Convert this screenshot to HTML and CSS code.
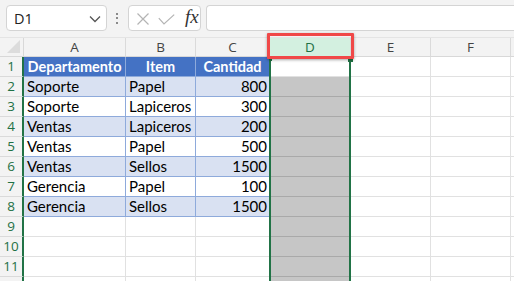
FILE: index.html
```html
<!DOCTYPE html>
<html>
<head>
<meta charset="utf-8">
<link rel="stylesheet" href="styles.css">
</head>
<body>
<div class="app">
  <div class="fbar">
    <div class="namebox">
      <span class="ref">D1</span>
      <svg class="chev" width="12" height="8" viewBox="0 0 12 8"><path d="M1 1.5 L6 6.5 L11 1.5" fill="none" stroke="#555" stroke-width="1.3"/></svg>
    </div>
    <div class="dots"><i></i><i></i><i></i></div>
    <div class="fxbox">
      <svg class="ico" width="14" height="12" viewBox="0 0 14 12"><path d="M1.5 0.5 L12.5 11.5 M12.5 0.5 L1.5 11.5" fill="none" stroke="#b4b4b4" stroke-width="1.2"/></svg>
      <svg class="ico chk" width="17" height="11" viewBox="0 0 17 11"><path d="M0.8 4.2 L6 10 L16.2 0.6" fill="none" stroke="#b4b4b4" stroke-width="1.2"/></svg>
      <span class="fx">fx</span>
    </div>
    <div class="formula"></div>
  </div>
  <div class="sheet">
    <div class="c corner"><span class="tri"></span></div>
    <div class="c ch">A</div><div class="c ch">B</div><div class="c ch">C</div><div class="c ch chsel">D</div><div class="c ch">E</div><div class="c ch">F</div><div class="c ch"></div>

    <div class="c rh">1</div><div class="c th">Departamento</div><div class="c th">Item</div><div class="c th">Cantidad</div><div class="c act"></div><div class="c"></div><div class="c"></div><div class="c"></div>

    <div class="c rh">2</div><div class="c tb">Soporte</div><div class="c tb">Papel</div><div class="c tb num">800</div><div class="c sel"></div><div class="c"></div><div class="c"></div><div class="c"></div>

    <div class="c rh">3</div><div class="c tw">Soporte</div><div class="c tw">Lapiceros</div><div class="c tw num">300</div><div class="c sel"></div><div class="c"></div><div class="c"></div><div class="c"></div>

    <div class="c rh">4</div><div class="c tb">Ventas</div><div class="c tb">Lapiceros</div><div class="c tb num">200</div><div class="c sel"></div><div class="c"></div><div class="c"></div><div class="c"></div>

    <div class="c rh">5</div><div class="c tw">Ventas</div><div class="c tw">Papel</div><div class="c tw num">500</div><div class="c sel"></div><div class="c"></div><div class="c"></div><div class="c"></div>

    <div class="c rh">6</div><div class="c tb">Ventas</div><div class="c tb">Sellos</div><div class="c tb num">1500</div><div class="c sel"></div><div class="c"></div><div class="c"></div><div class="c"></div>

    <div class="c rh">7</div><div class="c tw">Gerencia</div><div class="c tw">Papel</div><div class="c tw num">100</div><div class="c sel"></div><div class="c"></div><div class="c"></div><div class="c"></div>

    <div class="c rh">8</div><div class="c tb">Gerencia</div><div class="c tb">Sellos</div><div class="c tb num">1500</div><div class="c sel"></div><div class="c"></div><div class="c"></div><div class="c"></div>

    <div class="c rh">9</div><div class="c"></div><div class="c"></div><div class="c"></div><div class="c sel"></div><div class="c"></div><div class="c"></div><div class="c"></div>

    <div class="c rh">10</div><div class="c"></div><div class="c"></div><div class="c"></div><div class="c sel"></div><div class="c"></div><div class="c"></div><div class="c"></div>

    <div class="c rh">11</div><div class="c"></div><div class="c"></div><div class="c"></div><div class="c sel"></div><div class="c"></div><div class="c"></div><div class="c"></div>

    <div class="c rh"></div><div class="c"></div><div class="c"></div><div class="c"></div><div class="c sel"></div><div class="c"></div><div class="c"></div><div class="c"></div>
  </div>
  <div class="selection"></div>
  <div class="mark mark-l"></div>
  <div class="mark mark-r"></div>
  <div class="highlight"></div>
</div>
</body>
</html>
```
FILE: styles.css
```css
html, body {
  margin: 0;
  padding: 0;
  overflow: hidden;
  background: #ffffff;
}
.app {
  position: relative;
  width: 514px;
  height: 281px;
  overflow: hidden;
  font-family: Lato, "Liberation Sans", sans-serif;
}
.fbar {
  height: 38px;
  box-sizing: border-box;
  padding: 5px 0 0 6px;
  display: flex;
  align-items: flex-start;
  background: #f3f3f3;
  border-bottom: 1px solid #e4e4e4;
}
.namebox, .fxbox, .formula {
  height: 26px;
  box-sizing: border-box;
  background: #ffffff;
  border: 1px solid #d4d4d4;
  border-radius: 4px;
}
.namebox {
  width: 101px;
  display: flex;
  align-items: center;
  justify-content: space-between;
  padding: 0 5px 0 7px;
}
.ref {
  font-family: "Open Sans", "Noto Sans", sans-serif;
  font-size: 14.5px;
  color: #222;
}
.chev {
  margin-top: 1px;
}
.dots {
  width: 2px;
  height: 26px;
  margin: 0 10px 0 9px;
  display: flex;
  flex-direction: column;
  justify-content: center;
  gap: 2.5px;
}
.dots i {
  display: block;
  width: 2px;
  height: 2px;
  background: #8a8a8a;
}
.fxbox {
  width: 73px;
  display: flex;
  align-items: center;
  padding: 0 0 0 7px;
}
.ico {
  margin-top: 2px;
}
.chk {
  margin-left: 8px;
}
.fx {
  margin-left: 10px;
  font-family: "Liberation Serif", serif;
  font-style: italic;
  font-size: 19px;
  color: #333;
  margin-top: -2px;
}
.formula {
  margin-left: 5px;
  flex: 1;
  border-right: none;
  border-radius: 4px 0 0 4px;
}
.sheet {
  display: grid;
  grid-template-columns: 24px 102px 70px 74px 81px 80px 80px 1fr;
  grid-template-rows: 19px repeat(12, 20px);
}
.c {
  box-sizing: border-box;
  border-right: 1px solid #e1e1e1;
  border-bottom: 1px solid #e1e1e1;
  font-size: 15px;
  color: #000;
  line-height: 19px;
  padding: 0 3px;
  white-space: nowrap;
  overflow: hidden;
}
.corner {
  background: #f3f3f3;
  border-right: 1px solid #d8d8d8;
  border-bottom: 1px solid #d8d8d8;
  position: relative;
}
.tri {
  position: absolute;
  right: 3px;
  bottom: 3px;
  width: 0;
  height: 0;
  border-left: 13px solid transparent;
  border-bottom: 13px solid #dcdcdc;
}
.ch {
  background: #f3f3f3;
  border-right: 1px solid #dadada;
  border-bottom: 1px solid #d8d8d8;
  text-align: center;
  font-family: "Open Sans", "Noto Sans", sans-serif;
  font-size: 13.5px;
  line-height: 18px;
  color: #444;
}
.chsel {
  background: #d3f0e0;
  color: #1e7145;
}
.rh {
  background: #f3f3f3;
  border-right: 2px solid #217346;
  border-bottom: 1px solid #dadada;
  text-align: center;
  padding: 0;
  font-family: "Open Sans", "Noto Sans", sans-serif;
  font-size: 13.5px;
  color: #1e7145;
}
.th {
  background: #4472c4;
  color: #ffffff;
  font-weight: bold;
  font-size: 14.5px;
  text-align: center;
  border-right: 1px solid #8eaadb;
  border-bottom: 1px solid #8eaadb;
}
.tb {
  background: #d9e1f2;
  border-right: 1px solid #8eaadb;
  border-bottom: 1px solid #8eaadb;
}
.tw {
  background: #ffffff;
  border-right: 1px solid #8eaadb;
  border-bottom: 1px solid #8eaadb;
}
.num {
  text-align: right;
  padding-right: 2px;
}
.act {
  background: #ffffff;
}
.sel {
  background: #c6c6c6;
  border-bottom: 1px solid #a9a9a9;
}
.selection {
  position: absolute;
  left: 269px;
  top: 57px;
  width: 82px;
  height: 240px;
  box-sizing: border-box;
  border-left: 2px solid #217346;
  border-right: 2px solid #217346;
}
.mark {
  position: absolute;
  background: #217346;
  top: 57px;
  height: 4px;
}
.mark-l {
  left: 269px;
  width: 3px;
}
.mark-r {
  left: 348px;
  width: 5px;
  height: 5px;
}
.highlight {
  position: absolute;
  left: 267px;
  top: 33px;
  width: 87px;
  height: 26px;
  box-sizing: border-box;
  border: 3px solid #f04848;
  border-radius: 1px;
  box-shadow: 0 1px 3px rgba(0, 0, 0, 0.35);
}
```
